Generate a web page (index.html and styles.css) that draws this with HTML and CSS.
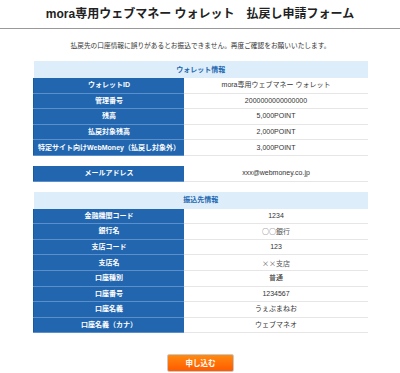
FILE: index.html
```html
<!DOCTYPE html>
<html lang="ja">
<head>
    <meta charset="UTF-8">
    <title>mora専用ウェブマネー ウォレット 払戻し申請フォーム</title>
    <link rel="stylesheet" href="styles.css">
</head>
<body>

    <h1 class="title">mora専用ウェブマネー ウォレット　払戻し申請フォーム</h1>

    <div class="container">
        <p class="notice">払戻先の口座情報に誤りがあるとお振込できません。再度ご確認をお願いいたします。</p>

        <table class="info">
            <tr><th colspan="2" class="caption">ウォレット情報</th></tr>
            <tr><th>ウォレットID</th><td>mora専用ウェブマネー ウォレット</td></tr>
            <tr><th>管理番号</th><td>2000000000000000</td></tr>
            <tr><th>残高</th><td>5,000POINT</td></tr>
            <tr><th>払戻対象残高</th><td>2,000POINT</td></tr>
            <tr><th>特定サイト向けWebMoney（払戻し対象外）</th><td>3,000POINT</td></tr>
        </table>

        <table class="info">
            <tr><th>メールアドレス</th><td>xxx@webmoney.co.jp</td></tr>
        </table>

        <table class="info">
            <tr><th colspan="2" class="caption">振込先情報</th></tr>
            <tr><th>金融機関コード</th><td>1234</td></tr>
            <tr><th>銀行名</th><td class="cjk">○○銀行</td></tr>
            <tr><th>支店コード</th><td>123</td></tr>
            <tr><th>支店名</th><td class="cjk">××支店</td></tr>
            <tr><th>口座種別</th><td>普通</td></tr>
            <tr><th>口座番号</th><td>1234567</td></tr>
            <tr><th>口座名義</th><td>うぇぶまねお</td></tr>
            <tr><th>口座名義（カナ）</th><td>ウェブマネオ</td></tr>
        </table>

        <div class="actions">
            <button class="submit">申し込む</button>
        </div>
    </div>

</body>
</html>
```

FILE: styles.css
```css
body {
    font-family: "Liberation Sans", "Noto Sans CJK JP", sans-serif;
    background: white;
    color: #333;
    margin: 0;
}

.title {
    font-size: 12px;
    font-weight: bold;
    color: #222;
    text-align: center;
    margin: 0;
    height: 28px;
    line-height: 28px;
    border-bottom: 1px solid #999;
}

.container {
    width: 335px;
    margin: 0 32px 0 33px;
}

.notice {
    font-size: 6.7px;
    text-align: center;
    margin: 12px 0 10px;
    line-height: 10px;
}

.info {
    width: 100%;
    border-collapse: collapse;
    font-size: 7px;
    margin-bottom: 10px;
}

.info th,
.info td {
    padding: 0;
    height: 14.6px;
    line-height: 14px;
    text-align: center;
}

.info th {
    width: 45%;
    background: #2266b0;
    color: white;
    font-weight: bold;
    border-bottom: 1px solid #5b8fcb;
    border-left: 1px solid #1a5aa0;
}

.info td {
    border-bottom: 1px solid #e6e6e6;
}

.info td.cjk {
    font-family: "Noto Sans CJK JP", sans-serif;
    color: #555;
}

.info th.caption {
    background: #ddeefa;
    color: #2266b0;
    height: 17px;
    border: none;
}

.actions {
    text-align: center;
    padding-top: 9px;
}

.submit {
    width: 67px;
    height: 18px;
    font-family: "Liberation Sans", "Noto Sans CJK JP", sans-serif;
    font-size: 7.5px;
    font-weight: bold;
    color: white;
    background: linear-gradient(#ff8a10, #ff5a00);
    border: 1px solid #c9c9c9;
    border-radius: 2px;
    padding: 0;
    cursor: pointer;
}
```
